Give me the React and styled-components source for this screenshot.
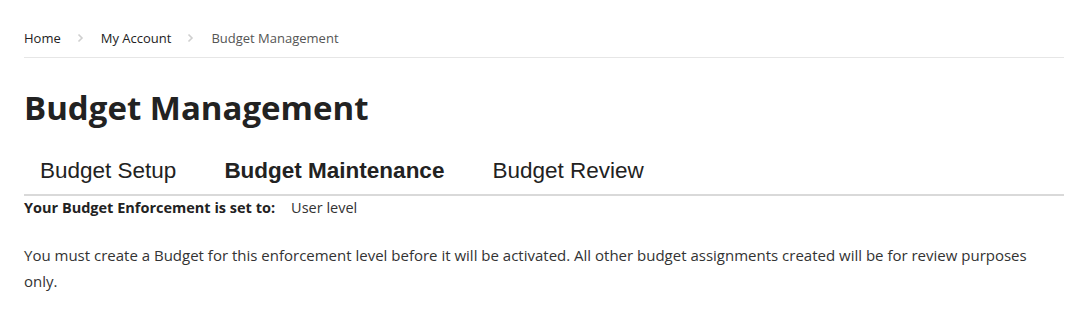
import React from "react";
import styled, { createGlobalStyle } from "styled-components";

const crumbs = ["Home", "My Account", "Budget Management"];
const tabs = [
  { label: "Budget Setup" },
  { label: "Budget Maintenance", active: true },
  { label: "Budget Review" },
];

function Chevron() {
  return (
    <svg width="7" height="10" viewBox="0 0 7 10" aria-hidden="true">
      <path d="M1.5 1.5 L5 5 L1.5 8.5" fill="none" stroke="#cfcfcf" strokeWidth="1.6" />
    </svg>
  );
}

export default function App() {
  return (
    <>
      <GlobalStyle />
      <Page>
        <Breadcrumb>
          {crumbs.map((c, i) => (
            <React.Fragment key={c}>
              <Crumb current={i === crumbs.length - 1}>{c}</Crumb>
              {i < crumbs.length - 1 && (
                <Sep>
                  <Chevron />
                </Sep>
              )}
            </React.Fragment>
          ))}
        </Breadcrumb>
        <Title>Budget Management</Title>
        <TabBar>
          {tabs.map((t) => (
            <Tab key={t.label} active={t.active}>
              {t.label}
            </Tab>
          ))}
        </TabBar>
        <Enforcement>
          <strong>Your Budget Enforcement is set to:</strong>
          <span>User level</span>
        </Enforcement>
        <Notice>
          You must create a Budget for this enforcement level before it will be activated. All other budget
          assignments created will be for review purposes only.
        </Notice>
      </Page>
    </>
  );
}

const GlobalStyle = createGlobalStyle`
  body {
    margin: 0;
    background: #fff;
    font-family: "Open Sans", "Liberation Sans", sans-serif;
    color: #222;
  }
`;

const Page = styled.div`
  padding: 26px 13px 0 24px;
`;

const Breadcrumb = styled.nav`
  display: flex;
  align-items: center;
  height: 24px;
  padding-bottom: 7px;
  border-bottom: 1px solid #e6e6e6;
  font-size: 13px;
`;

const Crumb = styled.span`
  color: ${({ current }) => (current ? "#555" : "#222")};
`;

const Sep = styled.span`
  display: inline-flex;
  align-items: center;
  margin: 0 17px 0 16px;
`;

const Title = styled.h1`
  margin: 30px 0 0 0;
  font-size: 33px;
  font-weight: 700;
  line-height: 40px;
  color: #222;
`;

const TabBar = styled.div`
  display: flex;
  gap: 16px;
  margin-top: 22px;
  border-bottom: 2px solid #d9d9d9;
`;

const Tab = styled.div`
  padding: 9px 16px 11px 16px;
  font-family: "Liberation Sans", Arial, sans-serif;
  font-size: 22.5px;
  line-height: 24px;
  font-weight: ${({ active }) => (active ? 700 : 400)};
  color: #222;
`;

const Enforcement = styled.div`
  display: flex;
  gap: 16px;
  margin-top: 2px;
  font-size: 14.5px;
  line-height: 20px;
  strong {
    font-weight: 700;
  }
  span {
    color: #333;
  }
`;

const Notice = styled.p`
  margin: 24px 0 0 0;
  font-size: 15px;
  line-height: 26px;
  color: #333;
`;
